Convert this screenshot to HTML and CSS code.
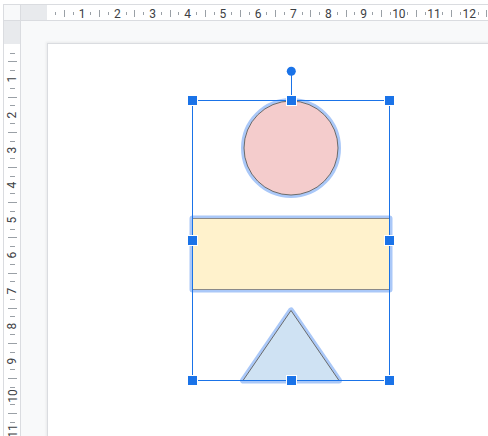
FILE: index.html
```html
<!DOCTYPE html>
<html>
<head>
<meta charset="utf-8">
<link rel="stylesheet" href="styles.css">
</head>
<body>
<div class="app">
  <div class="frame">
    <div class="corner"></div>
    <div class="hruler">
      <span></span><span class="s"></span><span class="l"></span><span class="s"></span>
      <span class="n">1</span><span class="s"></span><span class="l"></span><span class="s"></span>
      <span class="n">2</span><span class="s"></span><span class="l"></span><span class="s"></span>
      <span class="n">3</span><span class="s"></span><span class="l"></span><span class="s"></span>
      <span class="n">4</span><span class="s"></span><span class="l"></span><span class="s"></span>
      <span class="n">5</span><span class="s"></span><span class="l"></span><span class="s"></span>
      <span class="n">6</span><span class="s"></span><span class="l"></span><span class="s"></span>
      <span class="n">7</span><span class="s"></span><span class="l"></span><span class="s"></span>
      <span class="n">8</span><span class="s"></span><span class="l"></span><span class="s"></span>
      <span class="n">9</span><span class="s"></span><span class="l"></span><span class="s"></span>
      <span class="n">10</span><span class="s"></span><span class="l"></span><span class="s"></span>
      <span class="n">11</span><span class="s"></span><span class="l"></span><span class="s"></span>
      <span class="n">12</span><span class="s"></span><span class="l"></span><span class="s"></span>
    </div>
    <div class="vruler">
      <span></span><span class="s"></span><span class="l"></span><span class="s"></span>
      <span class="n"><b>1</b></span><span class="s"></span><span class="l"></span><span class="s"></span>
      <span class="n"><b>2</b></span><span class="s"></span><span class="l"></span><span class="s"></span>
      <span class="n"><b>3</b></span><span class="s"></span><span class="l"></span><span class="s"></span>
      <span class="n"><b>4</b></span><span class="s"></span><span class="l"></span><span class="s"></span>
      <span class="n"><b>5</b></span><span class="s"></span><span class="l"></span><span class="s"></span>
      <span class="n"><b>6</b></span><span class="s"></span><span class="l"></span><span class="s"></span>
      <span class="n"><b>7</b></span><span class="s"></span><span class="l"></span><span class="s"></span>
      <span class="n"><b>8</b></span><span class="s"></span><span class="l"></span><span class="s"></span>
      <span class="n"><b>9</b></span><span class="s"></span><span class="l"></span><span class="s"></span>
      <span class="n"><b>10</b></span><span class="s"></span><span class="l"></span><span class="s"></span>
      <span class="n"><b>11</b></span><span class="s"></span><span class="l"></span><span class="s"></span>
    </div>
    <div class="canvas">
      <div class="page">
        <svg class="drawing" width="440" height="392" viewBox="48 44 440 392">
          <!-- shape glows -->
          <circle cx="291" cy="148" r="47" fill="none" stroke="#aac8f8" stroke-width="6"/>
          <rect x="192.5" y="218.5" width="197" height="71" fill="none" stroke="#aac8f8" stroke-width="6" stroke-linejoin="round"/>
          <polygon points="291,310.5 243,380.5 339,380.5" fill="none" stroke="#aac8f8" stroke-width="6" stroke-linejoin="round"/>
          <!-- shapes -->
          <circle cx="291" cy="148" r="47" fill="#f4cccc" stroke="#6b6b6b" stroke-width="1"/>
          <rect x="192.5" y="218.5" width="197" height="71" fill="#fff2cc" stroke="#8a8a8a" stroke-width="1"/>
          <polygon points="291,310.5 243,380.5 339,380.5" fill="#cfe2f3" stroke="#6b6b6b" stroke-width="1" stroke-linejoin="round"/>
          <!-- selection -->
          <rect x="192.5" y="100.5" width="197" height="280" fill="none" stroke="#1a73e8" stroke-width="1"/>
          <line x1="291.5" y1="75" x2="291.5" y2="96" stroke="#1a73e8" stroke-width="1"/>
          <circle cx="291.3" cy="71.2" r="4.5" fill="#1a73e8"/>
          <g fill="#1a73e8" stroke="#ffffff" stroke-width="1">
            <rect x="187.5" y="95.5" width="10" height="10"/>
            <rect x="286.5" y="95.5" width="10" height="10"/>
            <rect x="384.5" y="95.5" width="10" height="10"/>
            <rect x="187.5" y="235.5" width="10" height="10"/>
            <rect x="384.5" y="235.5" width="10" height="10"/>
            <rect x="187.5" y="375.5" width="10" height="10"/>
            <rect x="286.5" y="375.5" width="10" height="10"/>
            <rect x="384.5" y="375.5" width="10" height="10"/>
          </g>
        </svg>
      </div>
    </div>
  </div>
</div>
</body>
</html>
```
FILE: styles.css
```css
* { box-sizing: border-box; }
html, body { margin: 0; padding: 0; background: #ffffff; }

.app {
  width: 488px;
  height: 436px;
  overflow: hidden;
  padding: 4px 0 0 3px;
  background: #ffffff;
}

.frame {
  display: grid;
  grid-template-columns: 17px 1fr;
  grid-template-rows: 16px 1fr;
  height: 100%;
  border-top: 1px solid #dadce0;
  border-left: 1px solid #dadce0;
}

.corner {
  background: #f8f9fa;
  border-right: 1px solid #dadce0;
  border-bottom: 1px solid #dadce0;
}

.hruler {
  display: flex;
  align-items: center;
  padding: 2px 0 0 21.6px;
  background: linear-gradient(to right, #e8eaed 26px, #ffffff 26px);
  border-bottom: 1px solid #dadce0;
  overflow: hidden;
  font-family: Roboto, "Liberation Sans", Arial, sans-serif;
  font-size: 12px;
  color: #3c4043;
}

.hruler > span {
  flex: 0 0 8.8px;
  min-width: 0;
  height: 12px;
  display: flex;
  justify-content: center;
  align-items: center;
  white-space: nowrap;
  line-height: 12px;
}

.hruler .s::before,
.hruler .l::before {
  content: "";
  display: block;
  flex: none;
  width: 1px;
  height: 3px;
  background: #9aa0a6;
}
.hruler .l::before { height: 7px; }

.vruler {
  display: flex;
  flex-direction: column;
  padding: 18.9px 0 0 1px;
  background: linear-gradient(to bottom, #e8eaed 23px, #ffffff 23px);
  border-right: 1px solid #dadce0;
  overflow: hidden;
  font-family: Roboto, "Liberation Sans", Arial, sans-serif;
  font-size: 12px;
  color: #3c4043;
}

.vruler > span {
  flex: 0 0 8.8px;
  min-height: 0;
  display: flex;
  justify-content: center;
  align-items: center;
}

.vruler .s::before,
.vruler .l::before {
  content: "";
  display: block;
  flex: none;
  width: 5px;
  height: 1px;
  background: #9aa0a6;
}
.vruler .l::before { width: 9px; }

.vruler b {
  flex: none;
  font-weight: normal;
  white-space: nowrap;
  line-height: 12px;
  transform: rotate(-90deg);
}

.canvas {
  background: #f8f9fa;
  padding: 22px 0 0 26px;
  overflow: hidden;
}

.page {
  width: 600px;
  height: 600px;
  background: #ffffff;
  border-top: 1px solid #dadce0;
  border-left: 1px solid #dadce0;
  box-shadow: -1px -1px 2px rgba(60, 64, 67, 0.08);
}

.drawing { display: block; }
```
